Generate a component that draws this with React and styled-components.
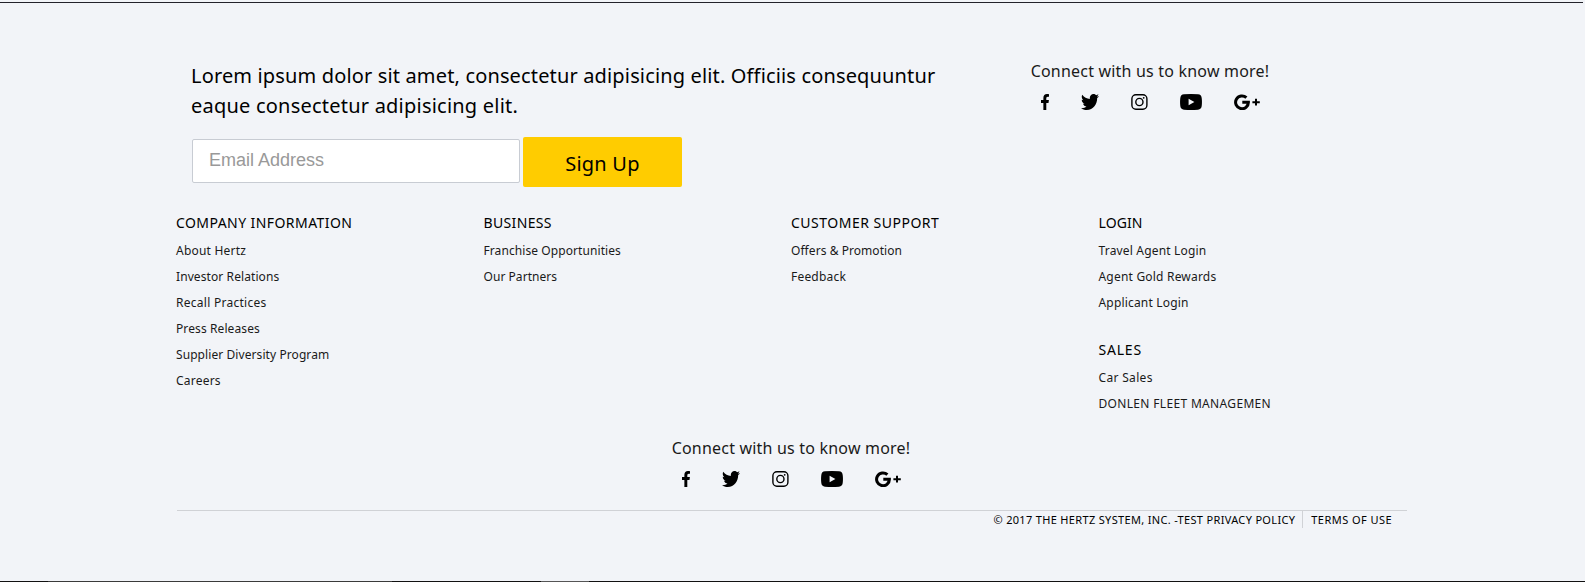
import React from 'react';
import styled, { createGlobalStyle } from 'styled-components';

const GlobalStyle = createGlobalStyle`
  * { box-sizing: border-box; }
  body {
    margin: 0;
    background: #f2f4f8;
    color: #000;
    font-family: "Noto Sans", "Open Sans", sans-serif;
  }
`;

const Page = styled.div`
  height: 582px;
  padding-top: 2px;
  display: flex;
  flex-direction: column;
  overflow: hidden;
`;
const TopRule = styled.div`
  height: 1px;
  margin-right: 2px;
  background: #23232b;
  flex: none;
`;
const Footer = styled.footer`
  flex: 1;
  min-height: 0;
  width: 1230px;
  margin-left: 177px;
`;
const BottomStrip = styled.div`
  display: flex;
  flex: none;
  height: 1px;
`;
const Segment = styled.span`
  flex: ${p => (p.$width ? `0 0 ${p.$width}px` : '1')};
  background: ${p => p.$color};
`;

const TopRow = styled.div`
  display: flex;
  height: 210px;
  padding: 58px 0 0 14px;
`;
const Newsletter = styled.div`
  width: 840px;
`;
const Lead = styled.p`
  margin: 0;
  font-size: 20px;
  line-height: 30px;
`;
const Tracked = styled.span`
  letter-spacing: ${p => p.$tracking || 0}px;
  white-space: nowrap;
`;
const Form = styled.form`
  display: flex;
  align-items: flex-start;
  gap: 3px;
  margin-top: 16px;
`;
const EmailInput = styled.input`
  width: 328px;
  height: 44px;
  margin: 2px 0 0 1px;
  padding: 0 15px 1px 16px;
  border: 1px solid #c8ccd3;
  border-radius: 2px;
  background: #fff;
  font: 18px "Liberation Sans", Arial, sans-serif;
  outline: none;
  &::placeholder { color: #999; opacity: 1; }
`;
const SignUp = styled.button`
  width: 159px;
  height: 50px;
  padding: 2px 0 0;
  border: 0;
  border-radius: 2px;
  background: #fc0;
  color: #000;
  font: 20px "Noto Sans", sans-serif;
  letter-spacing: 0.2px;
`;

const SocialBlock = styled.div`
  width: 238px;
  display: flex;
  flex-direction: column;
  align-items: center;
  margin: ${p => p.$margin || 0};
`;
const SocialTitle = styled.div`
  font-size: 16px;
  line-height: 24px;
  letter-spacing: 0.2px;
  white-space: nowrap;
  color: #1a1a1a;
`;
const SocialIcons = styled.div`
  display: flex;
  gap: 32px;
  margin-top: 11px;
  height: 16px;
  svg { display: block; flex: none; height: 16px; }
`;

const Columns = styled.div`
  display: grid;
  grid-template-columns: repeat(4, 307.5px);
  height: 223px;
  margin-left: -1px;
`;
const Heading = styled.h4`
  margin: 0 0 5px;
  font-size: 14px;
  font-weight: 400;
  line-height: 20px;
`;
const Links = styled.ul`
  list-style: none;
  margin: 0 0 24px;
  padding: 0;
`;
const LinkItem = styled.li`
  font-size: 12px;
  line-height: 26px;
  color: #1a1a1a;
`;

const Legal = styled.div`
  display: flex;
  justify-content: flex-end;
  margin-top: 23px;
  padding-right: 15px;
  border-top: 1px solid #d0d2d6;
  font-size: 11px;
  line-height: 17px;
`;
const LegalItem = styled.span`
  height: 17px;
  padding-left: ${p => (p.$divided ? 8 : 0)}px;
  margin-left: ${p => (p.$divided ? 7 : 0)}px;
  border-left: ${p => (p.$divided ? '1px solid #d0d2d6' : '0')};
`;

const FacebookIcon = () => (
  <svg width="8" height="16" viewBox="22.9 0 274.2 512" preserveAspectRatio="none">
    <path d="M279.14 288l14.22-92.66h-88.91v-60.13c0-25.35 12.42-50.06 52.24-50.06h40.42V6.26S260.43 0 225.36 0c-73.22 0-121.08 44.38-121.08 124.72v70.62H22.89V288h81.39v224h100.17V288z" />
  </svg>
);
const TwitterIcon = () => (
  <svg width="18" height="16" viewBox="0 48 512 416" preserveAspectRatio="none">
    <path d="M459.37 151.716c.325 4.548.325 9.097.325 13.645 0 138.72-105.583 298.558-298.558 298.558-59.452 0-114.68-17.219-161.137-47.106 8.447.974 16.568 1.299 25.34 1.299 49.055 0 94.213-16.568 130.274-44.832-46.132-.975-84.792-31.188-98.112-72.772 6.498.974 12.995 1.624 19.818 1.624 9.421 0 18.843-1.3 27.614-3.573-48.081-9.747-84.143-51.98-84.143-102.985v-1.299c13.969 7.797 30.214 12.67 47.431 13.319-28.264-18.843-46.781-51.005-46.781-87.391 0-19.492 5.197-37.36 14.294-52.954 51.655 63.675 129.3 105.258 216.365 109.807-1.624-7.797-2.599-15.918-2.599-24.04 0-57.828 46.782-104.934 104.934-104.934 30.213 0 57.502 12.67 76.67 33.137 23.715-4.548 46.456-13.32 66.599-25.34-7.798 24.366-24.366 44.833-46.132 57.827 21.117-2.273 41.584-8.122 60.426-16.243-14.292 20.791-32.161 39.308-52.628 54.253z" />
  </svg>
);
const InstagramIcon = () => (
  <svg width="17" height="16" viewBox="0 0 17 16" fill="none" stroke="#000">
    <rect x="0.9" y="0.7" width="15" height="14.6" rx="4" strokeWidth="1.4" />
    <circle cx="8.4" cy="8" r="3.6" strokeWidth="1.4" />
    <circle cx="12.7" cy="3.8" r="0.9" fill="#000" stroke="none" />
  </svg>
);
const YoutubeIcon = () => (
  <svg width="22" height="16" viewBox="0 0 22 16">
    <path
      fillRule="evenodd"
      d="M4 .3Q11-.3 18 .3Q21.4.6 21.7 4Q22.2 8 21.7 12Q21.4 15.4 18 15.7Q11 16.3 4 15.7Q.6 15.4.3 12Q-.2 8 .3 4Q.6.6 4 .3ZM8.6 4.8V11.2L14.4 8Z"
    />
  </svg>
);
const GooglePlusIcon = () => (
  <svg width="26" height="16" viewBox="0 0 26 16" fill="none" stroke="#000">
    <path d="M12.4 3.7A6.4 6.4 0 1 0 14.4 8.2H8.3" strokeWidth="3" />
    <path d="M22 4.8V11.6M18.4 8.2H25.8" strokeWidth="2" />
  </svg>
);

const Social = ({ margin }) => (
  <SocialBlock $margin={margin}>
    <SocialTitle>Connect with us to know more!</SocialTitle>
    <SocialIcons>
      <FacebookIcon />
      <TwitterIcon />
      <InstagramIcon />
      <YoutubeIcon />
      <GooglePlusIcon />
    </SocialIcons>
  </SocialBlock>
);

const COLUMNS = [
  [
    {
      title: ['COMPANY INFORMATION', 0.43],
      links: [
        ['About Hertz', 0.22],
        ['Investor Relations', 0.09],
        ['Recall Practices', 0.27],
        ['Press Releases', 0.1],
        ['Supplier Diversity Program', 0.08],
        ['Careers', 0.22],
      ],
    },
  ],
  [
    {
      title: ['BUSINESS', 0.35],
      links: [['Franchise Opportunities', 0.08], ['Our Partners', 0.05]],
    },
  ],
  [
    {
      title: ['CUSTOMER SUPPORT', 0.5],
      links: [['Offers & Promotion', 0.06], ['Feedback', 0.2]],
    },
  ],
  [
    {
      title: ['LOGIN', 0.1],
      links: [['Travel Agent Login', 0.18], ['Agent Gold Rewards', 0.2], ['Applicant Login', 0.18]],
    },
    {
      title: ['SALES', 0.8],
      links: [['Car Sales', 0.32], ['DONLEN FLEET MANAGEMEN', 0.33]],
    },
  ],
];

export default function App() {
  return (
    <Page>
      <GlobalStyle />
      <TopRule />
      <Footer>
        <TopRow>
          <Newsletter>
            <Lead>
              <Tracked $tracking={0.15}>
                Lorem ipsum dolor sit amet, consectetur adipisicing elit. Officiis consequuntur
              </Tracked>
              <br />
              <Tracked $tracking={0.22}>eaque consectetur adipisicing elit.</Tracked>
            </Lead>
            <Form>
              <EmailInput type="email" placeholder="Email Address" />
              <SignUp type="button">Sign Up</SignUp>
            </Form>
          </Newsletter>
          <Social margin="-2px 0 0" />
        </TopRow>
        <Columns>
          {COLUMNS.map((groups, i) => (
            <div key={i}>
              {groups.map(group => (
                <section key={group.title[0]}>
                  <Heading>
                    <Tracked $tracking={group.title[1]}>{group.title[0]}</Tracked>
                  </Heading>
                  <Links>
                    {group.links.map(([label, tracking]) => (
                      <LinkItem key={label}>
                        <Tracked $tracking={tracking}>{label}</Tracked>
                      </LinkItem>
                    ))}
                  </Links>
                </section>
              ))}
            </div>
          ))}
        </Columns>
        <Social margin="0 0 0 495px" />
        <Legal>
          <LegalItem>
            <Tracked $tracking={0.33}>© 2017 THE HERTZ SYSTEM, INC. -TEST PRIVACY POLICY</Tracked>
          </LegalItem>
          <LegalItem $divided>
            <Tracked $tracking={0.45}>TERMS OF USE</Tracked>
          </LegalItem>
        </Legal>
      </Footer>
      <BottomStrip>
        <Segment $width={48} $color="#111" />
        <Segment $width={344} $color="#3a3a3a" />
        <Segment $width={149} $color="#111" />
        <Segment $width={48} $color="#555" />
        <Segment $color="#111" />
      </BottomStrip>
    </Page>
  );
}
